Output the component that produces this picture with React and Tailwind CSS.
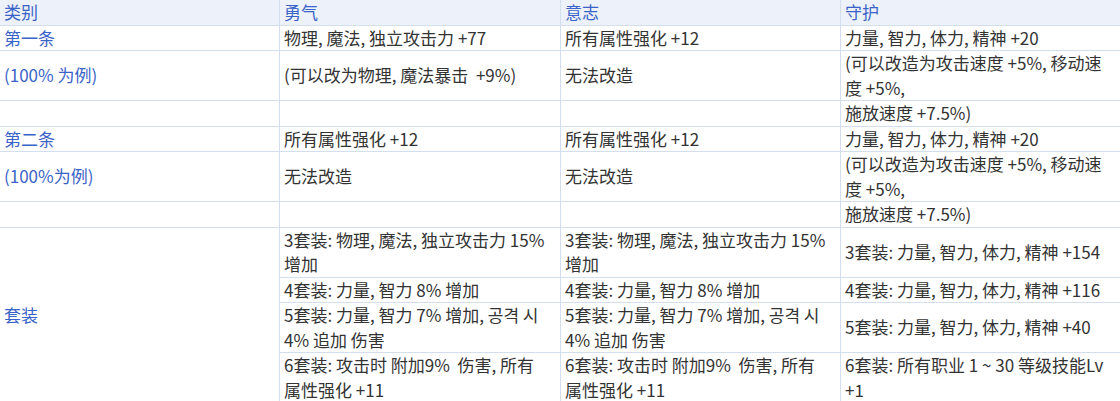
const rows = [
  { cat: '第一条', a: '物理, 魔法, 独立攻击力 +77', b: '所有属性强化 +12', c: '力量, 智力, 体力, 精神 +20' },
  {
    cat: '(100% 为例)',
    a: '(可以改为物理, 魔法暴击  +9%)',
    b: '无法改造',
    c: ['(可以改造为攻击速度 +5%, 移动速', '度 +5%,'],
  },
  { cat: '', a: '', b: '', c: '施放速度 +7.5%)' },
  { cat: '第二条', a: '所有属性强化 +12', b: '所有属性强化 +12', c: '力量, 智力, 体力, 精神 +20' },
  {
    cat: '(100%为例)',
    a: '无法改造',
    b: '无法改造',
    c: ['(可以改造为攻击速度 +5%, 移动速', '度 +5%,'],
  },
  { cat: '', a: '', b: '', c: '施放速度 +7.5%)' },
]

const setRows = [
  {
    a: ['3套装: 物理, 魔法, 独立攻击力 15%', '增加'],
    c: '3套装: 力量, 智力, 体力, 精神 +154',
  },
  { a: '4套装: 力量, 智力 8% 增加', c: '4套装: 力量, 智力, 体力, 精神 +116' },
  {
    a: ['5套装: 力量, 智力 7% 增加, 공격 시', '4% 追加 伤害'],
    c: '5套装: 力量, 智力, 体力, 精神 +40',
  },
  {
    a: ['6套装: 攻击时 附加9%  伤害, 所有', '属性强化 +11'],
    c: ['6套装: 所有职业 1 ~ 30 等级技能Lv', '+1'],
  },
]

function Lines({ value }) {
  if (Array.isArray(value)) {
    return value.map((line, i) => (
      <span key={i} className="block whitespace-pre">
        {line}
      </span>
    ))
  }
  return <span className="whitespace-pre">{value}</span>
}

const cell = 'border border-[#d3dfee] px-[4px] py-0 align-middle leading-[24.5px]'
const blue = 'text-[#3a63c8]'

export default function App() {
  return (
    <div
      className="h-[401px] w-[1120px] overflow-hidden bg-white text-[17px] text-[#333]"
      style={{ fontFamily: '"Noto Sans CJK SC", "Noto Sans CJK KR", sans-serif' }}
    >
      <table className="-ml-px -mt-px w-[1122px] table-fixed border-collapse text-left">
        <colgroup>
          <col className="w-[280px]" />
          <col className="w-[281px]" />
          <col className="w-[280px]" />
          <col className="w-[281px]" />
        </colgroup>
        <thead>
          <tr className="bg-[#edf2fa]">
            <th className={`${cell} ${blue} font-normal`}>类别</th>
            <th className={`${cell} ${blue} font-normal`}>勇气</th>
            <th className={`${cell} ${blue} font-normal`}>意志</th>
            <th className={`${cell} ${blue} font-normal`}>守护</th>
          </tr>
        </thead>
        <tbody>
          {rows.map((row, i) => (
            <tr key={i}>
              <td className={`${cell} ${blue}`}>{row.cat}</td>
              <td className={cell}>
                <Lines value={row.a} />
              </td>
              <td className={cell}>
                <Lines value={row.b} />
              </td>
              <td className={cell}>
                <Lines value={row.c} />
              </td>
            </tr>
          ))}
          {setRows.map((row, i) => (
            <tr key={`set-${i}`}>
              {i === 0 && (
                <td rowSpan={4} className={`${cell} ${blue}`}>
                  套装
                </td>
              )}
              <td className={cell}>
                <Lines value={row.a} />
              </td>
              <td className={cell}>
                <Lines value={row.a} />
              </td>
              <td className={cell}>
                <Lines value={row.c} />
              </td>
            </tr>
          ))}
        </tbody>
      </table>
    </div>
  )
}
